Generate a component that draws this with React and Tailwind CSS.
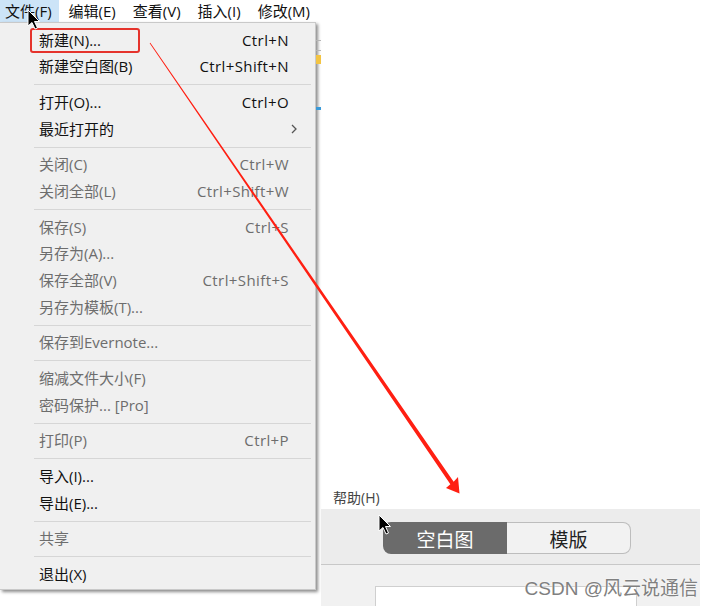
import React from 'react';

const menuBar = ['文件(F)', '编辑(E)', '查看(V)', '插入(I)', '修改(M)'];

// 文件菜单项，'sep' 为分隔线
const items = [
  { t: '新建(N)...', k: 'Ctrl+N', on: true, box: true },
  { t: '新建空白图(B)', k: 'Ctrl+Shift+N', on: true },
  'sep',
  { t: '打开(O)...', k: 'Ctrl+O', on: true },
  { t: '最近打开的', sub: true, on: true },
  'sep',
  { t: '关闭(C)', k: 'Ctrl+W' },
  { t: '关闭全部(L)', k: 'Ctrl+Shift+W' },
  'sep',
  { t: '保存(S)', k: 'Ctrl+S' },
  { t: '另存为(A)...' },
  { t: '保存全部(V)', k: 'Ctrl+Shift+S' },
  { t: '另存为模板(T)...' },
  'sep',
  { t: '保存到Evernote...' },
  'sep',
  { t: '缩减文件大小(F)' },
  { t: '密码保护... [Pro]' },
  'sep',
  { t: '打印(P)', k: 'Ctrl+P' },
  'sep',
  { t: '导入(I)...', on: true },
  { t: '导出(E)...', on: true },
  'sep',
  { t: '共享' },
  'sep',
  { t: '退出(X)', on: true },
];

const Cursor = ({ x, y }) => (
  <path
    transform={`translate(${x} ${y})`}
    d="M0 0 L0 16 L4 12.5 L7 19 L9.5 18 L6.5 11.5 L11.5 11.5 Z"
    fill="#000"
    stroke="#fff"
    strokeWidth="1"
    strokeLinejoin="round"
  />
);

const FileMenu = () => (
  <div className="w-[316px] self-start bg-[#f0f0f0] border border-l-0 border-[#c9c9c9] pt-[4px] pb-[1px] shadow-[2px_2px_3px_rgba(0,0,0,0.45)]">
    {items.map((it, i) =>
      it === 'sep' ? (
        <div key={i} className="h-[9px] flex items-center pl-[34px] pr-[4px]">
          <div className="h-px w-full bg-[#d6d6d6]" />
        </div>
      ) : (
        <div
          key={i}
          className={`relative h-[26.67px] flex items-center pl-[39px] pr-[26px] ${it.on ? 'text-[#111]' : 'text-[#6d6d6d]'}`}
        >
          {it.box && (
            <div className="absolute left-[30px] top-[1px] w-[110px] h-[25px] border-2 border-[#e5332c] rounded-[3px]" />
          )}
          <span className="flex-1 whitespace-nowrap">{it.t}</span>
          {it.k && <span className="whitespace-nowrap tracking-[0.4px]">{it.k}</span>}
          {it.sub && (
            <svg width="8" height="10" viewBox="0 0 8 10" className="-mr-[9px]">
              <path d="M2 1 L6 5 L2 9" fill="none" stroke="#555" strokeWidth="1.3" />
            </svg>
          )}
        </div>
      )
    )}
  </div>
);

export default function App() {
  return (
    <div className="relative w-[712px] h-[606px] overflow-hidden bg-white text-[15px] leading-none font-['Open_Sans','Noto_Sans_CJK_SC',sans-serif]">
      {/* 顶部菜单栏 */}
      <div className="h-[22px] flex gap-[5px] bg-white">
        {menuBar.map((m, i) => (
          <div
            key={m}
            className={`h-full flex items-center pl-[5px] pr-[7px] text-[#111] whitespace-nowrap ${i === 0 ? 'bg-[#cce4f7]' : ''}`}
          >
            {m}
          </div>
        ))}
      </div>

      <div className="flex h-[584px]">
        <FileMenu />

        {/* 菜单后面露出的一点窗口边 */}
        <div className="w-[5px] flex flex-col">
          <div className="h-[18px]" />
          <div className="h-px bg-[#b5b5b5]" />
          <div className="h-[9px]" />
          <div className="h-px bg-[#b5b5b5]" />
          <div className="h-[4px]" />
          <div className="h-[9px] bg-[#f3c443]" />
          <div className="h-[43px]" />
          <div className="h-[3px] bg-[#3a9ad9]" />
        </div>

        {/* 新建窗口 */}
        <div className="flex-1 mr-[12px] flex flex-col">
          <div className="flex-1" />
          <div className="h-[22px] flex items-center pl-[12px] text-[14px] text-[#444]">帮助(H)</div>
          <div className="h-[56px] bg-[#ececec] border-b border-[#c8c8c8] pt-[13px] pl-[62px]">
            <div className="flex h-[32px] w-[248px] text-[19px]">
              <div className="w-[124px] flex items-center justify-center bg-[#6b6b6b] text-white rounded-l-[8px] font-['Noto_Sans_CJK_SC',sans-serif]">
                空白图
              </div>
              <div className="flex-1 flex items-center justify-center bg-[#f2f2f2] text-[#222] border border-l-0 border-[#bdbdbd] rounded-r-[8px] font-['Noto_Sans_CJK_SC',sans-serif]">
                模版
              </div>
            </div>
          </div>
          <div className="h-[41px] bg-[#f1f1f1] pt-[21px] pl-[54px]">
            <div className="w-[262px] h-[20px] bg-white border border-b-0 border-[#cfcfcf]" />
          </div>
        </div>
      </div>

      {/* 红色箭头与鼠标指针 */}
      <svg className="absolute inset-0 pointer-events-none" width="712" height="606" viewBox="0 0 712 606">
        <polygon
          points="150.33,42.77 453.65,481.87 458,477 459.5,493.5 446,488 450.35,484.13 149.67,43.23"
          fill="#ff1f12"
        />
        <Cursor x={28} y={10} />
        <Cursor x={379} y={515} />
      </svg>

      <div className="absolute right-[14px] bottom-[8px] text-[19px] text-[#808080] whitespace-nowrap font-['Liberation_Sans','Noto_Sans_CJK_SC',sans-serif] [text-shadow:0_0_2px_#fff]">
        CSDN @风云说通信
      </div>
    </div>
  );
}
